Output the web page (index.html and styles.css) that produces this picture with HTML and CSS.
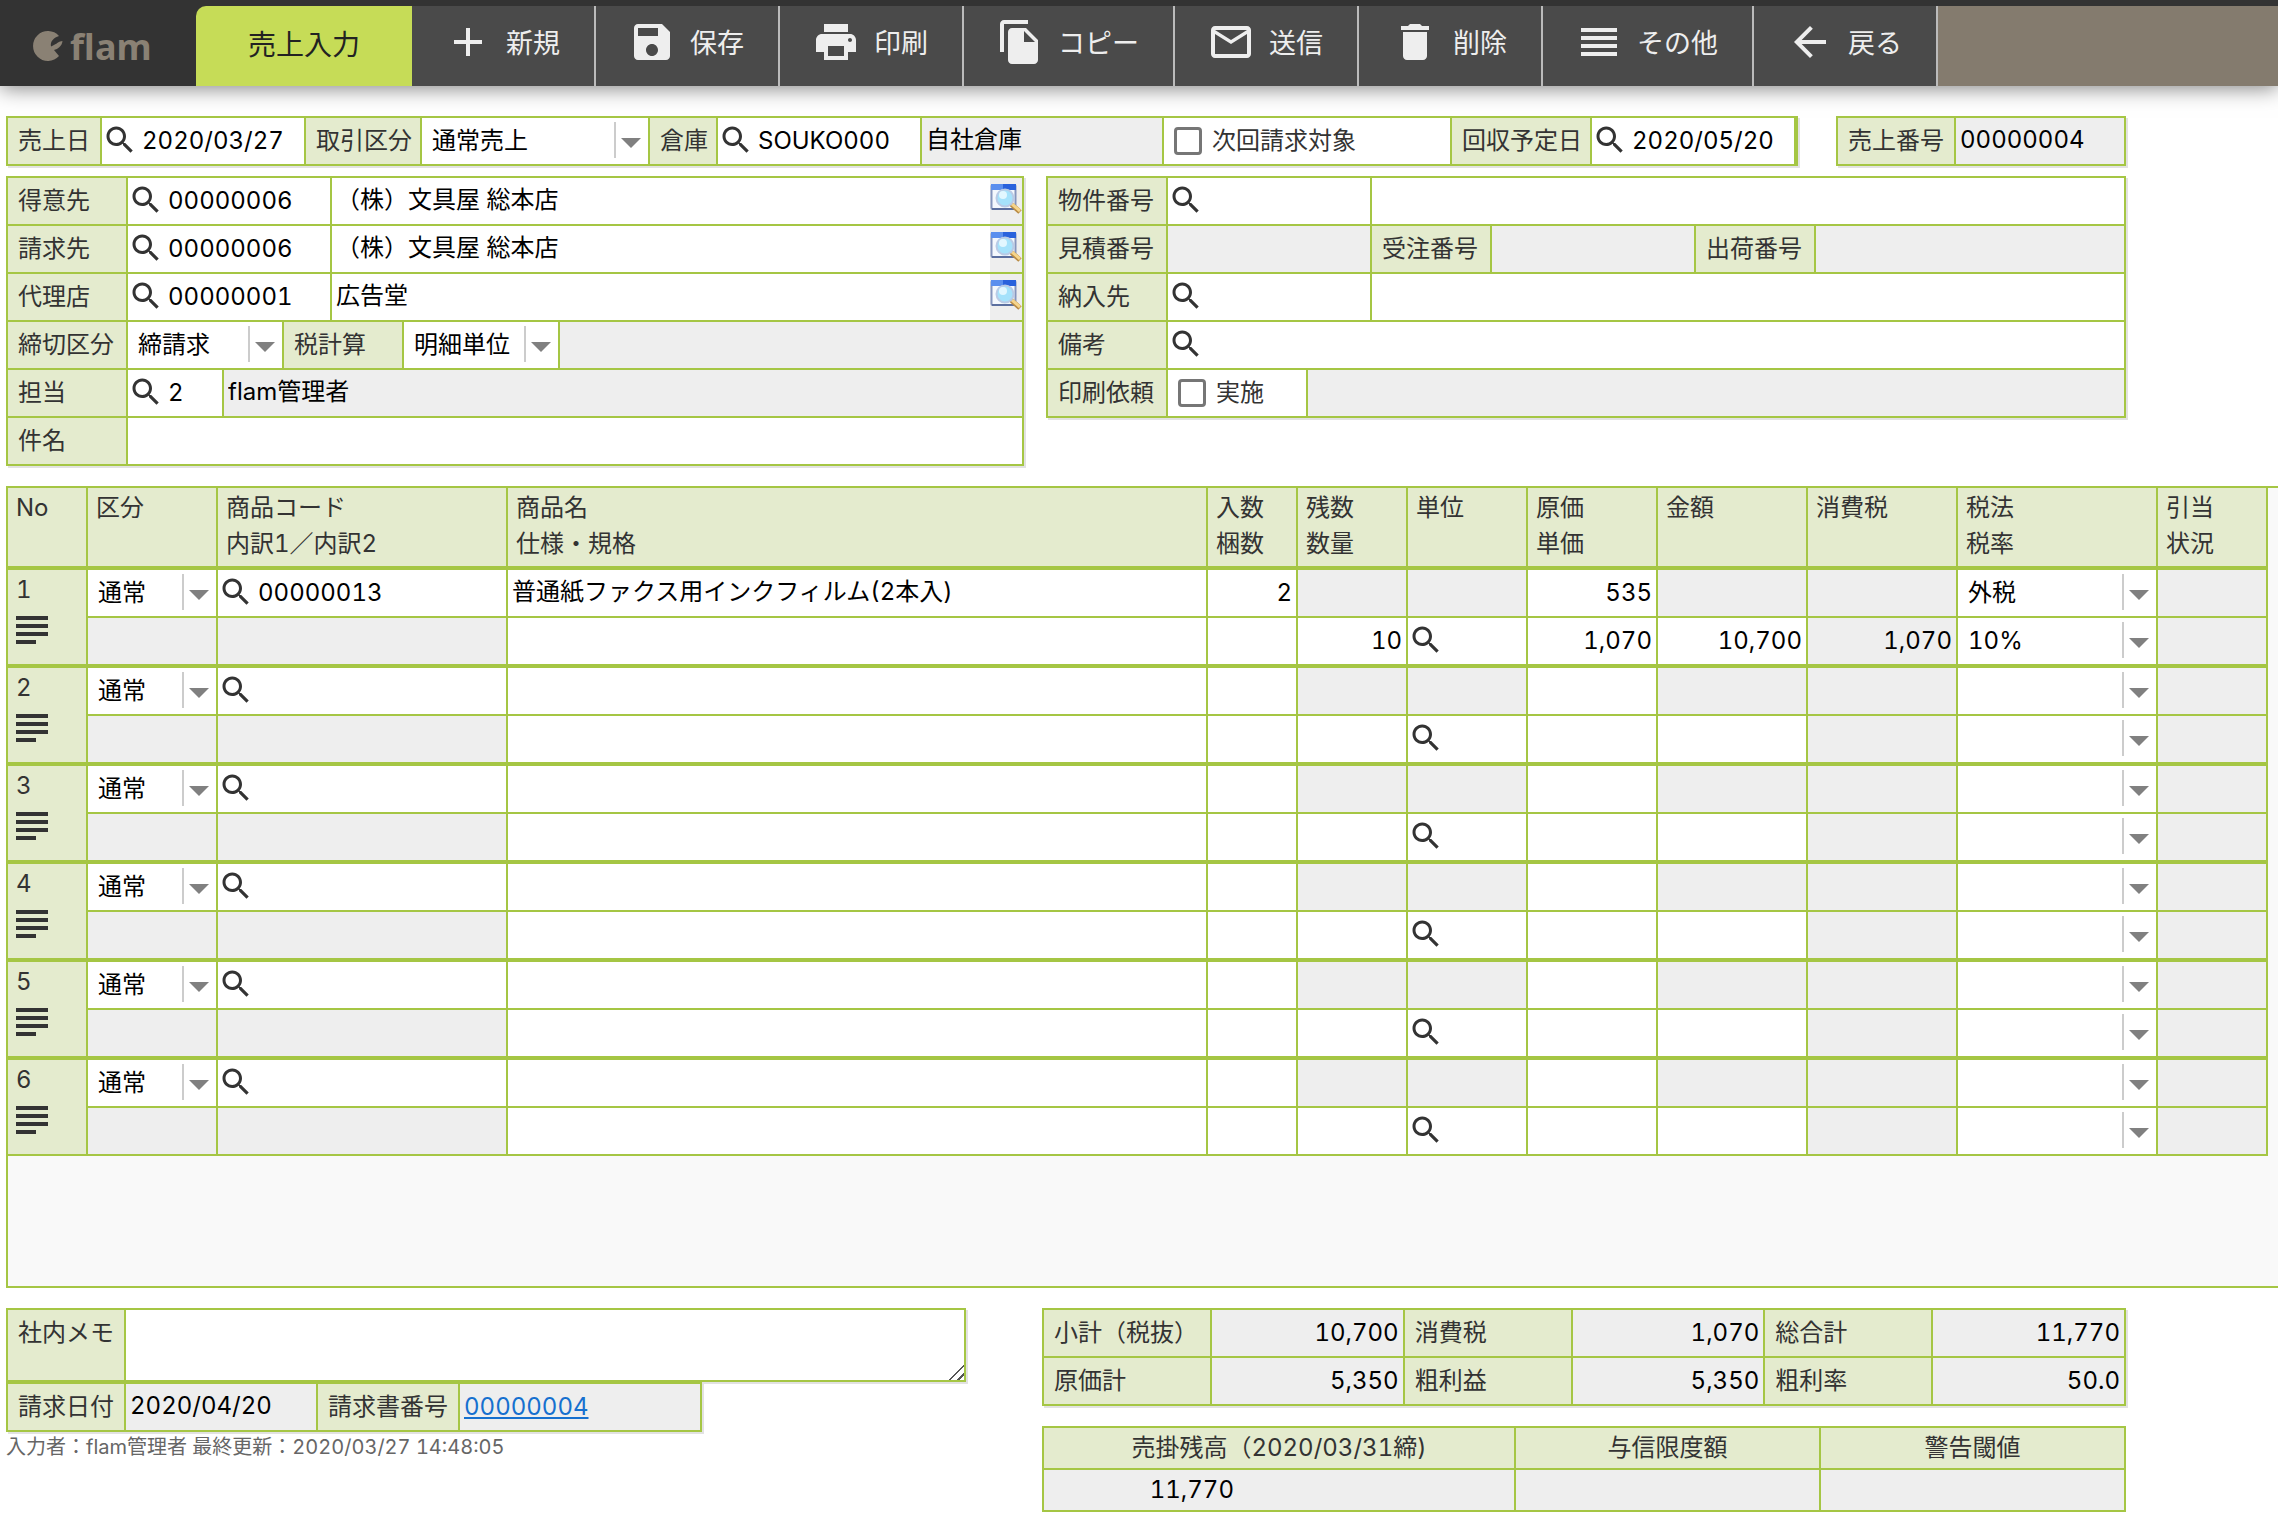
FILE: index.html
```html
<!DOCTYPE html>
<html lang="ja">
<head>
<meta charset="utf-8">
<meta name="viewport" content="width=device-width, initial-scale=1">
<title>売上入力 - flam</title>
<link rel="stylesheet" href="styles.css">
</head>
<body>
<svg class="sprite" aria-hidden="true">
  <symbol id="search" viewBox="0 0 24 24"><path d="M15.5 14h-.79l-.28-.27C15.41 12.59 16 11.11 16 9.5 16 5.91 13.09 3 9.5 3S3 5.91 3 9.5 5.91 16 9.5 16c1.61 0 3.09-.59 4.23-1.57l.27.28v.79l5 4.99L20.49 19l-4.99-5zm-6 0C7.01 14 5 11.99 5 9.5S7.01 5 9.5 5 14 7.01 14 9.5 11.99 14 9.5 14z"/></symbol>
  <symbol id="lines" viewBox="0 0 32 28"><path d="M0 0h32v4H0zM0 8h32v4H0zM0 16h32v4H0zM0 24h20v4H0z"/></symbol>
  <symbol id="detail" viewBox="0 0 32 32">
    <rect x="1.500" y="1" width="24" height="24" rx="1" fill="#f4f8fd" stroke="#8595bd" stroke-width="2"/>
    <path d="M1 0h25v6H1z" fill="#2a62dc"/><path d="M1 0h12v6H1z" fill="#5b8fee"/>
    <path d="M2 25h23" stroke="#5b6f9f" stroke-width="2"/>
    <path d="M21 20l9 8" stroke="#b98b45" stroke-width="5"/><path d="M22 20l8 7" stroke="#f5d48b" stroke-width="3"/>
    <circle cx="15" cy="14" r="8.500" fill="#a5e2fb" stroke="#b9cbe6" stroke-width="2"/>
    <circle cx="13" cy="11" r="4" fill="#e2f7ff"/>
  </symbol>
</svg>

<header class="toolbar">
  <div class="logo">
    <svg viewBox="0 0 30 30" aria-hidden="true"><path d="M26 5A14.900 14.900 0 1 0 26 25L21 19C25 18 29 15 29.500 10C26 10 24 13 18 15.500C17 11 20 7 26 5Z"/></svg>
    <span>flam</span>
  </div>
  <h1 class="tab">売上入力</h1>
  <nav class="actions">
    <button type="button"><svg viewBox="0 0 24 24"><path d="M19 13h-6v6h-2v-6H5v-2h6V5h2v6h6v2z"/></svg>新規</button>
    <button type="button"><svg viewBox="0 0 24 24"><path d="M17 3H5c-1.110 0-2 .9-2 2v14c0 1.100.89 2 2 2h14c1.100 0 2-.9 2-2V7l-4-4zm-5 16c-1.660 0-3-1.340-3-3s1.340-3 3-3 3 1.340 3 3-1.340 3-3 3zm3-10H5V5h10v4z"/></svg>保存</button>
    <button type="button"><svg viewBox="0 0 24 24"><path d="M19 8H5c-1.660 0-3 1.340-3 3v6h4v4h12v-4h4v-6c0-1.660-1.340-3-3-3zm-3 11H8v-5h8v5zm3-7c-.55 0-1-.45-1-1s.45-1 1-1 1 .45 1 1-.45 1-1 1zm-1-9H6v4h12V3z"/></svg>印刷</button>
    <button type="button"><svg viewBox="0 0 24 24"><path d="M16 1H4c-1.100 0-2 .9-2 2v14h2V3h12V1zm-1 4l6 6v10c0 1.100-.9 2-2 2H7.990C6.890 23 6 22.100 6 21l.01-14c0-1.100.89-2 1.990-2h7zm-1 7h5.500L14 6.500V12z"/></svg>コピー</button>
    <button type="button"><svg viewBox="0 0 24 24"><path d="M20 4H4c-1.100 0-1.990.9-1.990 2L2 18c0 1.100.9 2 2 2h16c1.100 0 2-.9 2-2V6c0-1.100-.9-2-2-2zm0 14H4V8l8 5 8-5v10zm-8-7L4 6h16l-8 5z"/></svg>送信</button>
    <button type="button"><svg viewBox="0 0 24 24"><path d="M6 19c0 1.100.9 2 2 2h8c1.100 0 2-.9 2-2V7H6v12zM19 4h-3.500l-1-1h-5l-1 1H5v2h14V4z"/></svg>削除</button>
    <button type="button"><svg viewBox="0 0 24 24"><path d="M3 15h18v-2H3v2zm0 4h18v-2H3v2zm0-8h18V9H3v2zm0-6v2h18V5H3z"/></svg>その他</button>
    <button type="button"><svg viewBox="0 0 24 24"><path d="M20 11H7.830l5.590-5.590L12 4l-8 8 8 8 1.410-1.410L7.830 13H20v-2z"/></svg>戻る</button>
  </nav>
</header>

<main>
<form>
  <div class="sheet top">
    <section class="box summary-line">
      <div class="row">
        <label class="lbl" for="sales-date">売上日</label>
        <div class="find date"><input id="sales-date" value="2020/03/27"><svg><use href="#search"/></svg></div>
        <label class="lbl deal-lbl" for="deal">取引区分</label>
        <div class="pick deal"><select id="deal"><option>通常売上</option></select></div>
        <label class="lbl" for="souko">倉庫</label>
        <div class="find date"><input id="souko" value="SOUKO000"><svg><use href="#search"/></svg></div>
        <div class="cell grow"><input class="off" aria-label="倉庫名" value="自社倉庫" readonly></div>
        <label class="check next"><input type="checkbox">次回請求対象</label>
        <label class="lbl due-lbl" for="due">回収予定日</label>
        <div class="find date"><input id="due" value="2020/05/20"><svg><use href="#search"/></svg></div>
      </div>
    </section>
    <section class="box number">
      <div class="row">
        <label class="lbl" for="sales-no">売上番号</label>
        <div class="cell grow"><input class="off" id="sales-no" value="00000004" readonly></div>
      </div>
    </section>
  </div>

  <div class="sheet parties">
    <section class="box">
      <div class="row">
        <label class="lbl std" for="cust">得意先</label>
        <div class="find code"><input id="cust" value="00000006"><svg><use href="#search"/></svg></div>
        <div class="cell grow"><input aria-label="得意先名" value="（株）文具屋 総本店"><button class="detail" type="button" aria-label="得意先の詳細"><svg><use href="#detail"/></svg></button></div>
      </div>
      <div class="row">
        <label class="lbl std" for="bill">請求先</label>
        <div class="find code"><input id="bill" value="00000006"><svg><use href="#search"/></svg></div>
        <div class="cell grow"><input aria-label="請求先名" value="（株）文具屋 総本店"><button class="detail" type="button" aria-label="請求先の詳細"><svg><use href="#detail"/></svg></button></div>
      </div>
      <div class="row">
        <label class="lbl std" for="agent">代理店</label>
        <div class="find code"><input id="agent" value="00000001"><svg><use href="#search"/></svg></div>
        <div class="cell grow"><input aria-label="代理店名" value="広告堂"><button class="detail" type="button" aria-label="代理店の詳細"><svg><use href="#detail"/></svg></button></div>
      </div>
      <div class="row">
        <label class="lbl std" for="closing">締切区分</label>
        <div class="pick closing"><select id="closing"><option>締請求</option></select></div>
        <label class="lbl std" for="taxcalc">税計算</label>
        <div class="pick closing"><select id="taxcalc"><option>明細単位</option></select></div>
        <div class="cell off grow"></div>
      </div>
      <div class="row">
        <label class="lbl std" for="staff">担当</label>
        <div class="find staff"><input id="staff" value="2"><svg><use href="#search"/></svg></div>
        <div class="cell grow"><input class="off" aria-label="担当者名" value="flam管理者" readonly></div>
      </div>
      <div class="row">
        <label class="lbl std" for="subject">件名</label>
        <div class="cell grow"><input id="subject"></div>
      </div>
    </section>

    <section class="box">
      <div class="row">
        <label class="lbl std" for="project">物件番号</label>
        <div class="find code"><input id="project"><svg><use href="#search"/></svg></div>
        <div class="cell grow"><input aria-label="物件名"></div>
      </div>
      <div class="row">
        <label class="lbl std" for="quote">見積番号</label>
        <div class="cell code"><input class="off" id="quote" readonly></div>
        <label class="lbl std" for="order">受注番号</label>
        <div class="cell code"><input class="off" id="order" readonly></div>
        <label class="lbl std" for="ship">出荷番号</label>
        <div class="cell grow"><input class="off" id="ship" readonly></div>
      </div>
      <div class="row">
        <label class="lbl std" for="deliver">納入先</label>
        <div class="find code"><input id="deliver"><svg><use href="#search"/></svg></div>
        <div class="cell grow"><input aria-label="納入先名"></div>
      </div>
      <div class="row">
        <label class="lbl std" for="note">備考</label>
        <div class="find grow"><input id="note"><svg><use href="#search"/></svg></div>
      </div>
      <div class="row">
        <span class="lbl std">印刷依頼</span>
        <label class="check do"><input type="checkbox">実施</label>
        <div class="cell off grow"></div>
      </div>
    </section>
  </div>

  <section class="lines">
    <table>
      <colgroup>
        <col class="c-no"><col class="c-kind"><col class="c-code"><col><col class="c-pack"><col class="c-qty"><col class="c-unit"><col class="c-price"><col class="c-amount"><col class="c-amount"><col class="c-tax"><col class="c-stock">
      </colgroup>
      <thead>
        <tr>
          <th>No</th><th>区分</th><th>商品コード<br>内訳1／内訳2</th><th>商品名<br>仕様・規格</th><th>入数<br>梱数</th><th>残数<br>数量</th><th>単位</th><th>原価<br>単価</th><th>金額</th><th>消費税</th><th>税法<br>税率</th><th>引当<br>状況</th>
        </tr>
      </thead>
      <tbody>
        <tr>
          <th rowspan="2" scope="rowgroup">1<button type="button" aria-label="1行目のメニュー"><svg><use href="#lines"/></svg></button></th>
          <td><div class="pick"><select aria-label="区分"><option>通常</option></select></div></td>
          <td><div class="find"><input aria-label="商品コード" value="00000013"><svg><use href="#search"/></svg></div></td>
          <td><input aria-label="商品名" value="普通紙ファクス用インクフィルム(2本入)"></td>
          <td><input class="num" aria-label="入数" value="2"></td>
          <td class="off"></td><td class="off"></td>
          <td><input class="num" aria-label="原価" value="535"></td>
          <td class="off"></td><td class="off"></td>
          <td><div class="pick"><select aria-label="税法"><option>外税</option></select></div></td>
          <td class="off"></td>
        </tr>
        <tr>
          <td class="off"></td><td class="off"></td>
          <td><input aria-label="仕様・規格"></td>
          <td><input class="num" aria-label="梱数"></td>
          <td><input class="num" aria-label="数量" value="10"></td>
          <td><div class="find"><input aria-label="単位"><svg><use href="#search"/></svg></div></td>
          <td><input class="num" aria-label="単価" value="1,070"></td>
          <td><input class="num" aria-label="金額" value="10,700"></td>
          <td class="off"><input class="num off" aria-label="消費税" value="1,070" readonly></td>
          <td><div class="pick"><select aria-label="税率"><option>10%</option></select></div></td>
          <td class="off"></td>
        </tr>
      </tbody>
      <tbody>
        <tr>
          <th rowspan="2" scope="rowgroup">2<button type="button" aria-label="2行目のメニュー"><svg><use href="#lines"/></svg></button></th>
          <td><div class="pick"><select aria-label="区分"><option>通常</option></select></div></td>
          <td><div class="find"><input aria-label="商品コード"><svg><use href="#search"/></svg></div></td>
          <td><input aria-label="商品名"></td>
          <td><input class="num" aria-label="入数"></td>
          <td class="off"></td><td class="off"></td>
          <td><input class="num" aria-label="原価"></td>
          <td class="off"></td><td class="off"></td>
          <td><div class="pick"><select aria-label="税法"><option></option></select></div></td>
          <td class="off"></td>
        </tr>
        <tr>
          <td class="off"></td><td class="off"></td>
          <td><input aria-label="仕様・規格"></td>
          <td><input class="num" aria-label="梱数"></td>
          <td><input class="num" aria-label="数量"></td>
          <td><div class="find"><input aria-label="単位"><svg><use href="#search"/></svg></div></td>
          <td><input class="num" aria-label="単価"></td>
          <td><input class="num" aria-label="金額"></td>
          <td class="off"></td>
          <td><div class="pick"><select aria-label="税率"><option></option></select></div></td>
          <td class="off"></td>
        </tr>
      </tbody>
      <tbody>
        <tr>
          <th rowspan="2" scope="rowgroup">3<button type="button" aria-label="3行目のメニュー"><svg><use href="#lines"/></svg></button></th>
          <td><div class="pick"><select aria-label="区分"><option>通常</option></select></div></td>
          <td><div class="find"><input aria-label="商品コード"><svg><use href="#search"/></svg></div></td>
          <td><input aria-label="商品名"></td>
          <td><input class="num" aria-label="入数"></td>
          <td class="off"></td><td class="off"></td>
          <td><input class="num" aria-label="原価"></td>
          <td class="off"></td><td class="off"></td>
          <td><div class="pick"><select aria-label="税法"><option></option></select></div></td>
          <td class="off"></td>
        </tr>
        <tr>
          <td class="off"></td><td class="off"></td>
          <td><input aria-label="仕様・規格"></td>
          <td><input class="num" aria-label="梱数"></td>
          <td><input class="num" aria-label="数量"></td>
          <td><div class="find"><input aria-label="単位"><svg><use href="#search"/></svg></div></td>
          <td><input class="num" aria-label="単価"></td>
          <td><input class="num" aria-label="金額"></td>
          <td class="off"></td>
          <td><div class="pick"><select aria-label="税率"><option></option></select></div></td>
          <td class="off"></td>
        </tr>
      </tbody>
      <tbody>
        <tr>
          <th rowspan="2" scope="rowgroup">4<button type="button" aria-label="4行目のメニュー"><svg><use href="#lines"/></svg></button></th>
          <td><div class="pick"><select aria-label="区分"><option>通常</option></select></div></td>
          <td><div class="find"><input aria-label="商品コード"><svg><use href="#search"/></svg></div></td>
          <td><input aria-label="商品名"></td>
          <td><input class="num" aria-label="入数"></td>
          <td class="off"></td><td class="off"></td>
          <td><input class="num" aria-label="原価"></td>
          <td class="off"></td><td class="off"></td>
          <td><div class="pick"><select aria-label="税法"><option></option></select></div></td>
          <td class="off"></td>
        </tr>
        <tr>
          <td class="off"></td><td class="off"></td>
          <td><input aria-label="仕様・規格"></td>
          <td><input class="num" aria-label="梱数"></td>
          <td><input class="num" aria-label="数量"></td>
          <td><div class="find"><input aria-label="単位"><svg><use href="#search"/></svg></div></td>
          <td><input class="num" aria-label="単価"></td>
          <td><input class="num" aria-label="金額"></td>
          <td class="off"></td>
          <td><div class="pick"><select aria-label="税率"><option></option></select></div></td>
          <td class="off"></td>
        </tr>
      </tbody>
      <tbody>
        <tr>
          <th rowspan="2" scope="rowgroup">5<button type="button" aria-label="5行目のメニュー"><svg><use href="#lines"/></svg></button></th>
          <td><div class="pick"><select aria-label="区分"><option>通常</option></select></div></td>
          <td><div class="find"><input aria-label="商品コード"><svg><use href="#search"/></svg></div></td>
          <td><input aria-label="商品名"></td>
          <td><input class="num" aria-label="入数"></td>
          <td class="off"></td><td class="off"></td>
          <td><input class="num" aria-label="原価"></td>
          <td class="off"></td><td class="off"></td>
          <td><div class="pick"><select aria-label="税法"><option></option></select></div></td>
          <td class="off"></td>
        </tr>
        <tr>
          <td class="off"></td><td class="off"></td>
          <td><input aria-label="仕様・規格"></td>
          <td><input class="num" aria-label="梱数"></td>
          <td><input class="num" aria-label="数量"></td>
          <td><div class="find"><input aria-label="単位"><svg><use href="#search"/></svg></div></td>
          <td><input class="num" aria-label="単価"></td>
          <td><input class="num" aria-label="金額"></td>
          <td class="off"></td>
          <td><div class="pick"><select aria-label="税率"><option></option></select></div></td>
          <td class="off"></td>
        </tr>
      </tbody>
      <tbody>
        <tr>
          <th rowspan="2" scope="rowgroup">6<button type="button" aria-label="6行目のメニュー"><svg><use href="#lines"/></svg></button></th>
          <td><div class="pick"><select aria-label="区分"><option>通常</option></select></div></td>
          <td><div class="find"><input aria-label="商品コード"><svg><use href="#search"/></svg></div></td>
          <td><input aria-label="商品名"></td>
          <td><input class="num" aria-label="入数"></td>
          <td class="off"></td><td class="off"></td>
          <td><input class="num" aria-label="原価"></td>
          <td class="off"></td><td class="off"></td>
          <td><div class="pick"><select aria-label="税法"><option></option></select></div></td>
          <td class="off"></td>
        </tr>
        <tr>
          <td class="off"></td><td class="off"></td>
          <td><input aria-label="仕様・規格"></td>
          <td><input class="num" aria-label="梱数"></td>
          <td><input class="num" aria-label="数量"></td>
          <td><div class="find"><input aria-label="単位"><svg><use href="#search"/></svg></div></td>
          <td><input class="num" aria-label="単価"></td>
          <td><input class="num" aria-label="金額"></td>
          <td class="off"></td>
          <td><div class="pick"><select aria-label="税率"><option></option></select></div></td>
          <td class="off"></td>
        </tr>
      </tbody>
    </table>
  </section>

  <div class="sheet bottom">
    <div class="left">
      <section class="box memo">
        <div class="row">
          <label class="lbl memo-lbl" for="memo">社内メモ</label>
          <div class="cell grow"><textarea id="memo"></textarea></div>
        </div>
      </section>
      <section class="box billing">
        <div class="row">
          <label class="lbl memo-lbl" for="bill-date">請求日付</label>
          <div class="cell bill-date"><input class="off" id="bill-date" value="2020/04/20" readonly></div>
          <span class="lbl bill-no">請求書番号</span>
          <div class="cell off grow"><a href="#invoice">00000004</a></div>
        </div>
      </section>
      <p class="stamp">入力者：flam管理者 最終更新：2020/03/27 14:48:05</p>
    </div>
    <div class="right">
      <table class="totals">
        <colgroup><col class="t-lbl"><col><col class="t-lbl"><col><col class="t-lbl"><col></colgroup>
        <tr><th>小計（税抜）</th><td>10,700</td><th>消費税</th><td>1,070</td><th>総合計</th><td>11,770</td></tr>
        <tr><th>原価計</th><td>5,350</td><th>粗利益</th><td>5,350</td><th>粗利率</th><td>50.0</td></tr>
      </table>
      <table class="balance">
        <colgroup><col class="b-first"><col><col></colgroup>
        <tr><th>売掛残高（2020/03/31締)</th><th>与信限度額</th><th>警告閾値</th></tr>
        <tr><td><span>11,770</span></td><td></td><td></td></tr>
      </table>
    </div>
  </div>
</form>
</main>
</body>
</html>
```

FILE: styles.css
```css
:root {
  --line: #a5c644;
  --label: #e4ebce;
  --off: #eee;
  --ink: #333;
}

* { box-sizing: border-box; }

body {
  margin: 0;
  background: #fff;
  color: var(--ink);
  font: 24px/36px Inter, "Noto Sans CJK JP", sans-serif;
  font-variant-numeric: tabular-nums;
  overflow-x: hidden;
}

.sprite { position: absolute; width: 0; height: 0; }

input, select, textarea, button {
  margin: 0;
  border: 0;
  border-radius: 0;
  font: inherit;
  font-variant-numeric: inherit;
  outline: 0;
}

/* toolbar */
.toolbar {
  display: flex;
  height: 86px;
  padding-top: 6px;
  background: #333;
  box-shadow: 0 2px 20px rgba(0, 0, 0, .5);
}
.logo {
  display: flex;
  align-items: center;
  gap: 7px;
  flex: none;
  width: 196px;
  padding: 0 0 0 33px;
  color: #8a8174;
  font: bold 36px/48px "Noto Sans", sans-serif;
}
.logo svg { width: 30px; height: 30px; fill: currentColor; }
.logo span { padding-top: 2px; }
.tab {
  flex: none;
  margin: 0;
  padding: 0 52px 2px;
  border-radius: 10px 0 0 0;
  background: #c6dc57;
  color: #222;
  font-size: 28px;
  font-weight: 400;
  line-height: 78px;
}
.actions {
  display: flex;
  flex: 1;
  background: #847b6e;
}
.actions button {
  display: flex;
  align-items: center;
  flex: none;
  gap: 14px;
  padding: 0 34px 4px 32px;
  border-right: 2px solid #bbb;
  background: #4a4a4a;
  color: #eee;
  font-size: 27px;
}
.actions svg {
  width: 48px;
  height: 48px;
  margin-bottom: 4px;
  fill: currentColor;
}

/* form boxes */
main { padding: 30px 0 8px 6px; }
.sheet { max-width: 2120px; }
.top { display: flex; gap: 38px; }
.summary-line { flex: 1; }
.number { flex: 0 0 290px; }
.parties {
  display: grid;
  grid-template-columns: 1018fr 1080fr;
  gap: 22px;
  align-items: start;
  margin-top: 10px;
}
.box {
  border: solid var(--line);
  border-width: 2px 0 0 2px;
  box-shadow: 2px 2px 0 #e2e2e2;
}
.summary-line { border-right-width: 2px; }
.row {
  display: flex;
  min-height: 48px;
  border-bottom: 2px solid var(--line);
}
.lbl, .cell, .row > .find, .row > .pick, .row > .check {
  flex: none;
  border-right: 2px solid var(--line);
}
.lbl {
  padding: 0 8px 0 10px;
  background: var(--label);
  line-height: 46px;
  white-space: nowrap;
}
.number .lbl, .std { width: 120px; }
.number .lbl { width: 118px; }
.row > .grow { flex: 1; min-width: 0; }
.cell { display: flex; }
.cell input, .find input, .lines td > input {
  width: 100%;
  min-width: 0;
  height: 46px;
  padding: 0 4px;
  background: #fff;
  color: #000;
  line-height: 46px;
}
.cell input, .lines td > input:not(.num) {
  padding-bottom: 2px;
}
.off, .cell input.off { background: var(--off); }
.find, .pick { position: relative; height: 46px; }
.find input { padding-left: 40px; }
.find svg {
  position: absolute;
  left: 0;
  top: 4px;
  width: 36px;
  height: 36px;
  fill: #333;
  pointer-events: none;
}
.pick select {
  display: block;
  width: 100%;
  height: 46px;
  padding: 0 34px 0 10px;
  appearance: none;
  background: #fff;
  color: #000;
}
.pick::before, .pick::after {
  content: "";
  position: absolute;
  pointer-events: none;
}
.pick::before {
  top: 4px;
  right: 32px;
  width: 2px;
  height: 36px;
  background: #ccc;
}
.pick::after {
  top: 20px;
  right: 7px;
  width: 20px;
  height: 10px;
  background: #808080;
  clip-path: polygon(0 0, 100% 0, 50% 100%);
}
.row > .lbl:first-child:not(.std):not(.memo-lbl) { padding-right: 10px; }
.deal-lbl { width: 116px; }
.due-lbl { width: 140px; }
.date { width: 204px; }
.deal { width: 228px; }
.code { width: 204px; }
.closing { width: 156px; }
.staff { width: 96px; }
.next { width: 288px; }
.do { width: 140px; }
.check {
  display: flex;
  align-items: center;
  gap: 10px;
  padding-left: 10px;
}
.check input {
  width: 28px;
  height: 28px;
  border: 3px solid #767676;
  border-radius: 4px;
  appearance: none;
}
.detail {
  flex: none;
  width: 32px;
  padding: 0 0 2px;
  background: var(--off);
}
.detail svg { display: block; width: 32px; height: 32px; }

/* sales lines */
.lines {
  margin-top: 20px;
  padding: 0 10px 130px 0;
  border: solid var(--line);
  border-width: 2px 0 2px 2px;
  background: #f9f9f9;
}
table {
  width: 100%;
  border-spacing: 0;
  table-layout: fixed;
}
.c-no { width: 80px; }
.c-kind { width: 130px; }
.c-code { width: 290px; }
.c-pack { width: 90px; }
.c-qty { width: 110px; }
.c-unit { width: 120px; }
.c-price { width: 130px; }
.c-amount { width: 150px; }
.c-tax { width: 200px; }
.c-stock { width: 110px; }
th, td {
  padding: 0;
  border: solid var(--line);
  border-width: 0 2px 2px 0;
}
th {
  background: var(--label);
  font-weight: 400;
  text-align: left;
}
.lines th {
  padding: 2px 8px 0;
  vertical-align: top;
}
.lines thead th { height: 82px; border-bottom-width: 4px; }
.lines td { height: 48px; background: #fff; }
.lines td.off { background: var(--off); }
.lines tbody:not(:last-child) tr:last-child td { height: 50px; border-bottom-width: 4px; }
.lines tbody:not(:last-child) th { border-bottom-width: 4px; }
.lines td > input { display: block; }
.lines td > input.off { background: var(--off); }
.num { text-align: right; }
.lines th button {
  display: block;
  margin-top: 8px;
  padding: 0;
  background: none;
}
.lines th svg { display: block; width: 32px; height: 28px; fill: #333; }

/* memo, billing, totals */
.bottom {
  display: grid;
  grid-template-columns: 960fr 1084fr;
  gap: 76px;
  margin-top: 20px;
}
.memo-lbl { width: 118px; }
.memo textarea {
  display: block;
  width: 100%;
  height: 70px;
  padding: 4px;
  background: #fff;
  resize: both;
}
.memo textarea::-webkit-resizer {
  background: linear-gradient(135deg, transparent 48%, #555 48%, #555 56%, transparent 56%, transparent 76%, #555 76%, #555 84%, transparent 84%);
}
.billing { width: 696px; max-width: 100%; }
.bill-date { width: 192px; }
.bill-no { width: 142px; }
.cell a {
  padding-left: 4px;
  color: #1670cf;
  line-height: 46px;
}
.stamp {
  margin: 0;
  color: #666;
  font-size: 20px;
  line-height: 30px;
}
.right { display: grid; gap: 20px; align-content: start; }
.totals, .balance {
  border: solid var(--line);
  border-width: 2px 0 0 2px;
}
.totals { box-shadow: 2px 2px 0 #e2e2e2; }
.t-lbl { width: 168px; }
.totals th { height: 48px; padding: 0 0 0 10px; white-space: nowrap; }
.totals td {
  padding: 0 4px 0 0;
  background: var(--off);
  color: #000;
  text-align: right;
}
.b-first { width: 472px; }
.balance th, .balance td { height: 42px; text-align: center; }
.balance td { background: var(--off); color: #000; }
.balance span {
  display: block;
  width: 190px;
  text-align: right;
}
```
